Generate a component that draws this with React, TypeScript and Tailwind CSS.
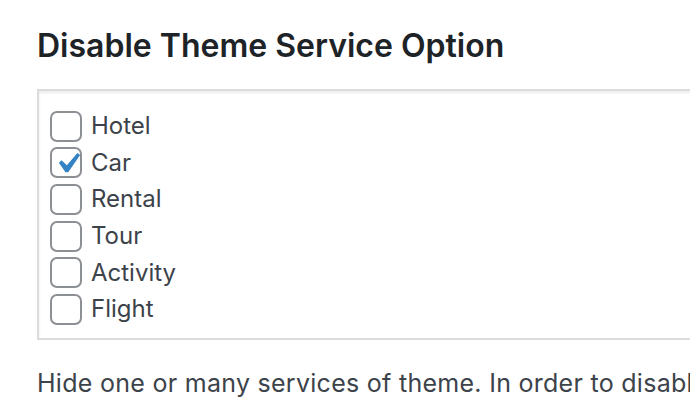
const services = [
  { label: 'Hotel', checked: false },
  { label: 'Car', checked: true },
  { label: 'Rental', checked: false },
  { label: 'Tour', checked: false },
  { label: 'Activity', checked: false },
  { label: 'Flight', checked: false },
];

const Checkbox = ({ checked }: { checked: boolean }) => (
  <span className="relative flex h-[31px] w-[32px] shrink-0 items-center justify-center rounded-[7px] border-2 border-[#8c8f94] bg-white">
    {checked && (
      <svg viewBox="0 0 20 20" className="absolute left-[-5px] top-[-6px] h-[41px] w-[41px]">
        <path d="M14.83 4.89l1.34.94-5.81 8.38H9.02L5.78 9.67l1.34-1.25 2.57 2.4z" fill="#3582c4" />
      </svg>
    )}
  </span>
);

export default function App() {
  return (
    <div
      className="h-[416px] w-[690px] overflow-hidden bg-white pl-[37px] pt-[27px] text-[#3c434a]"
      style={{ fontFamily: 'Inter, "Noto Sans", sans-serif' }}
    >
      <h2 className="text-[32px] font-semibold leading-[38px] text-[#1d2327]">Disable Theme Service Option</h2>
      <div className="mt-[24px] w-[700px] border-2 border-[#dcdcde] pb-[10px] pl-[11px] pt-[17px] shadow-[inset_0_2px_3px_rgba(0,0,0,0.08)]">
        {services.map((s) => (
          <label key={s.label} className="flex h-[36.6px] items-center gap-[9px]">
            <Checkbox checked={s.checked} />
            <span className="text-[24px] leading-none">{s.label}</span>
          </label>
        ))}
      </div>
      <p className="mt-[28px] whitespace-nowrap text-[25px] leading-[30px] tracking-[0.28px]">
        Hide one or many services of theme. In order to disable
      </p>
    </div>
  );
}
